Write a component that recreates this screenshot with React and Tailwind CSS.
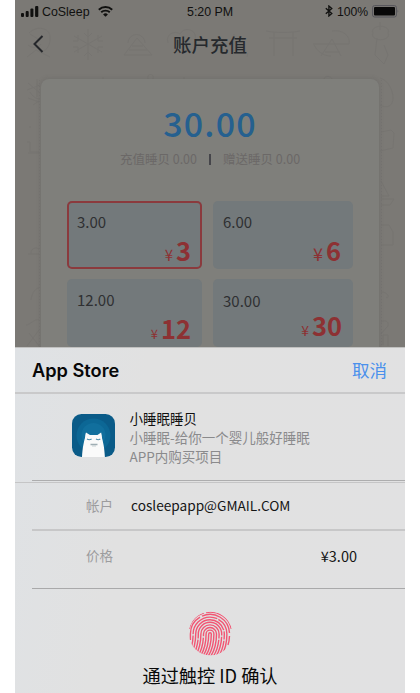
import React from "react";

const CJK = "font-['Noto_Sans_CJK_SC',sans-serif]";

function Doodles() {
  return (
    <svg className="absolute left-0 top-0 h-[347px] w-[390px]" viewBox="15 0 390 347" fill="none" stroke="#716f6c" strokeWidth="1" opacity="0.4">
      <path d="M29 33c8-8 20-5 21 3s-3 15-8 15M27 57l9-7 14 7M30 34l8 5M28 45c5 4 10 3 13-1" />
      <path d="M88 29v31M74 36l28 16M74 52l28-16M84 33l4 4 4-4M84 56l4-4 4 4M78 35v6h-5M98 53v-6h5M78 53v-6h-5M98 35v6h5" />
      <path d="M124 55h28l-15-17zM129 50h18M132 46h11M128 43a8 8 0 1 1 17 0" />
      <path d="M168 43c-3-9 7-13 12-9 5-9 18-3 15 5M234 34v17M240 53a4 4 0 1 1 7 4" />
      <path d="M266 31c10 2 24 2 34 0M269 38h28M274 32v24M293 32v24" />
      <path d="M313 44h36c2-8-7-15-17-13M314 45c5 9 12 11 17 11M332 39l-11 17M332 39l9 17M325 52h15" />
      <path d="M380 22v8M373 33a8 5 0 1 0 15 0 8 5 0 1 0-15 0M377 38l-2 17 9 9 4-9-4-10" />
      <path d="M37 79v18M28 83l12 10M27 90l13-5M40 99c-4 0-8-3-10-7M28 98l11 4M33 105l6-4M27 142h3v10h9M28 153h12M30 128v-2M28 254h11M31 254a5 5 0 0 1 8-5M31 300c1-8 5-12 8-12M26 325c4 0 9-7 13-5M29 333l11 14M39 330l-12 16" />
      <path d="M380 78c8 2 13 12 13 20 0 8-6 11-13 7M381 132l10-2 3 3-1 15-13 3M381 181l8 15h-8M381 199h13l-4 6h-9M381 225h8l4 7v13h-12M381 292c9 0 8 8 5 5M381 322c6-4 10 3 5 6l-5 6M383 345v-10h5v11" />
      <path d="M103 79v-2M148 79c-2-6 7-6 5 0M184 79v-2M324 79c1-4 7-3 8 0" />
      <path d="M39.5 80v267M381.5 80v267" strokeDasharray="1 2" />
    </svg>
  );
}

function StatusBar() {
  return (
    <div className="relative flex h-[23px] items-center text-[12px] text-[#10100f] font-['Liberation_Sans',Arial,sans-serif]">
      <svg className="ml-[6px] h-[11px] w-[18px]" viewBox="0 0 18 11" fill="#10100f">
        <rect x="0" y="7" width="3" height="4" rx="1" />
        <rect x="4.7" y="5" width="3" height="6" rx="1" />
        <rect x="9.4" y="2.5" width="3" height="8.5" rx="1" />
        <rect x="14.1" y="0" width="3.2" height="11" rx="1" />
      </svg>
      <span className="ml-[3px] w-[48px] whitespace-nowrap pt-px text-[12.4px]">CoSleep</span>
      <svg className="ml-[8px] h-[11px] w-[15px]" viewBox="0 0 15 11" fill="none" stroke="#10100f" strokeWidth="1.9">
        <path d="M.8 3.7a9.8 9.8 0 0 1 13.4 0M3.2 6.3a6.3 6.3 0 0 1 8.6 0" />
        <path d="M7.5 10.8 5.1 8.4a3.6 3.6 0 0 1 4.8 0z" fill="#10100f" stroke="none" />
      </svg>
      <span className="ml-[74px] w-[47px] whitespace-nowrap pt-px text-[12.4px]">5:20 PM</span>
      <svg className="ml-[91px] h-[12px] w-[8px] -mt-[2px]" viewBox="0 0 8 12" fill="none" stroke="#10100f" strokeWidth="1.3">
        <path d="M.8 3.2 6.8 8.6 3.9 11V1l2.9 2.4L.8 8.8" />
      </svg>
      <span className="ml-[4px] w-[32px] whitespace-nowrap pt-px text-[12.2px]">100%</span>
      <svg className="ml-[3px] h-[13px] w-[27px] -mt-px" viewBox="0 0 27 13">
        <rect x=".6" y=".6" width="23.8" height="11.4" rx="2" fill="none" stroke="#55555b" />
        <rect x="2" y="2" width="21" height="8.6" rx="1" fill="#080808" />
        <path d="M25.6 4.5q1.4 1.8 0 3.6z" fill="#55555b" />
      </svg>
    </div>
  );
}

function Tile({ amount, price, selected, labelClass, yenClass, priceClass }) {
  return (
    <div className={`h-[68px] rounded-[5px] bg-[#73797b] ${selected ? "ring-2 ring-inset ring-[#8b3a3d]" : ""}`}>
      <div className={`pl-[10px] text-[15px] leading-[20px] text-[#2f3032] ${labelClass}`}>{amount}</div>
      <div className={`flex items-baseline justify-end leading-[26px] text-[#8d3133] ${priceClass}`}>
        <span className={`mr-[3px] ${yenClass}`}>¥</span>
        <span className="text-[25.5px] font-bold">{price}</span>
      </div>
    </div>
  );
}

function AppIcon() {
  return (
    <svg className="h-[43px] w-[43px]" viewBox="0 0 43 43">
      <defs>
        <clipPath id="appShape"><rect width="43" height="43" rx="9.5" /></clipPath>
      </defs>
      <g clipPath="url(#appShape)">
        <rect width="43" height="43" fill="#0a5b88" />
        <circle cx="21.5" cy="21.5" r="17" fill="#0c6795" />
        <circle cx="21.5" cy="21" r="12" fill="#116f9d" />
        <path d="M10 43c.5-9 2-16 3-19 .2-2 .3-4 1-5.5l4 2.4h7.5l3.6-2.5c.7 2 .8 4 1 6 1.2 4 2.4 10 2.8 18.6z" fill="#fafafa" />
        <path d="M15 25q2.3 1.4 4.6 0M24 25q2.3 1.4 4.3 0" stroke="#4f91ae" strokeWidth="1.1" fill="none" />
        <path d="M18.5 30.5h7" stroke="#9faeb4" strokeWidth="1.4" />
        <path d="M20 32h4" stroke="#bac5c9" strokeWidth=".8" />
      </g>
    </svg>
  );
}

const RIDGES = [
  { r: 1.3, dash: "100" },
  { r: 3.9, dash: "100" },
  { r: 6.5, dash: "22 1.2 60" },
  { r: 9.1, dash: "58 1.2 60" },
  { r: 11.7, dash: "20 1.2 42 1.2 60" },
  { r: 14.3, dash: "66 1.2 8 1.2 60" },
  { r: 16.9, dash: "24 1.2 34 1.2 60" },
];

function Fingerprint() {
  return (
    <svg className="h-[45px] w-[45px]" viewBox="0 0 45 45" fill="none" stroke="#f25573" strokeWidth="1.4">
      <defs>
        <clipPath id="pad"><circle cx="22.5" cy="22.5" r="21.8" /></clipPath>
      </defs>
      <g clipPath="url(#pad)">
        {RIDGES.map(({ r, dash }) => (
          <path
            key={r}
            strokeDasharray={dash}
            d={`M${22 - r - 7} 47Q${22 - r} 38 ${22 - r} 23A${r} ${r} 0 0 1 ${22 + r} 23Q${22 + r} 38 ${22 + r - 7} 47`}
          />
        ))}
        <path d="M2.4 29V23A19.5 19.5 0 0 1 12 6.2M14 5.1A19.5 19.5 0 0 1 41.5 22M41.5 25Q41.3 30 40 34" />
        <path d="M1.2 18A21.5 21.5 0 0 1 16 2M18 1.6A21.3 21.3 0 0 1 43.2 18" strokeWidth="1.1" />
      </g>
    </svg>
  );
}

function PurchaseSheet() {
  return (
    <section className="h-[346px] bg-[linear-gradient(100deg,#dfe2e5_0%,#e1e1e1_30%,#e1e1e2_100%)]">
      <header className="flex h-[47px] items-center justify-between border-b-2 border-t border-b-[#c9c9ca] border-t-[#c0c0bf] pl-[17px] pr-[18px]">
        <h2 className="text-[18.2px] font-semibold leading-none text-[#080808] font-['Inter',sans-serif]">App Store</h2>
        <button className="text-[17.5px] leading-none text-[#4a90ec]">取消</button>
      </header>
      <div className="flex h-[86px] pl-[57px] pt-[20px]">
        <AppIcon />
        <div className="ml-[14.5px] -mt-[5px] whitespace-nowrap text-[13.5px] leading-[19px] text-[#8a8a8c]">
          <div className="text-[#111]">小睡眠睡贝</div>
          <div>小睡眠-给你一个婴儿般好睡眠</div>
          <div>APP内购买项目</div>
        </div>
      </div>
      <div className="ml-[17px] h-px bg-[#adadae]" />
      <div className="mt-px h-px bg-[#c5c5c6]" />
      <div className="flex h-[46px] items-center pb-[2px] pl-[71px]">
        <span className="w-[45px] text-[13.5px] text-[#9c9c9e]">帐户</span>
        <span className="text-[13.65px] text-[#151515]">cosleepapp@GMAIL.COM</span>
      </div>
      <div className="ml-[17px] h-[2px] bg-[#c7c7c8]" />
      <div className="flex h-[57px] items-center justify-between pb-[8px] pl-[71px] pr-[48px]">
        <span className="text-[13.5px] text-[#9c9c9e]">价格</span>
        <span className="text-[14.5px] text-[#151515]">¥3.00</span>
      </div>
      <div className="ml-[17px] h-px bg-[#a9a9aa]" />
      <div className="flex flex-col items-center pt-[22px]">
        <Fingerprint />
        <div className="mt-[6px] text-[18.2px] leading-[26px] text-[#090909]">通过触控 ID 确认</div>
      </div>
    </section>
  );
}

export default function App() {
  return (
    <div className={`h-[693px] w-[420px] overflow-hidden bg-white ${CJK}`}>
      <main className="relative ml-[15px] h-[693px] w-[390px] overflow-hidden bg-[#7b7975]">
        <Doodles />
        <div className="relative h-[347px] overflow-hidden">
          <StatusBar />
          <header className="flex h-[56px] items-start pt-[11px]">
            <svg className="ml-[18px] mt-px h-[18px] w-[11px]" viewBox="0 0 11 18" fill="none" stroke="#25272b" strokeWidth="2">
              <path d="M9.5 1 1.5 9l8 8" />
            </svg>
            <h1 className="ml-[129px] text-[18.5px] font-medium leading-[20px] text-[#26292d]">账户充值</h1>
          </header>
          <div className="ml-[26px] h-[290px] w-[338px] rounded-t-[8px] bg-[#7f7f7b] shadow-[0_0_5px_rgba(70,70,68,0.22)]">
            <div className="pt-[25px] text-center text-[34px] font-medium leading-[38px] tracking-[1.2px] text-[#25608f]">30.00</div>
            <div className="mt-[8px] flex items-center justify-center whitespace-nowrap text-[12.5px] leading-[18px] text-[#6b6867]">
              <span>充值睡贝 0.00</span>
              <span className="mx-[12px] h-[11px] w-[2px] bg-[#45454a]" />
              <span>赠送睡贝 0.00</span>
            </div>
            <div className="ml-[26px] mt-[33px] grid grid-cols-[135px_140px] gap-x-[11px] gap-y-[10px]">
              <Tile amount="3.00" price="3" selected labelClass="pt-[11px]" priceClass="pt-[5px] pr-[11px]" yenClass="text-[15px]" />
              <Tile amount="6.00" price="6" labelClass="pt-[11px]" priceClass="pt-[5px] pr-[12px]" yenClass="text-[18px]" />
              <Tile amount="12.00" price="12" labelClass="pt-[11px]" priceClass="pt-[5px] pr-[11px]" yenClass="text-[13px]" />
              <Tile amount="30.00" price="30" labelClass="pt-[12px]" priceClass="pt-px pr-[11px]" yenClass="text-[14px]" />
            </div>
          </div>
        </div>
        <PurchaseSheet />
      </main>
    </div>
  );
}
